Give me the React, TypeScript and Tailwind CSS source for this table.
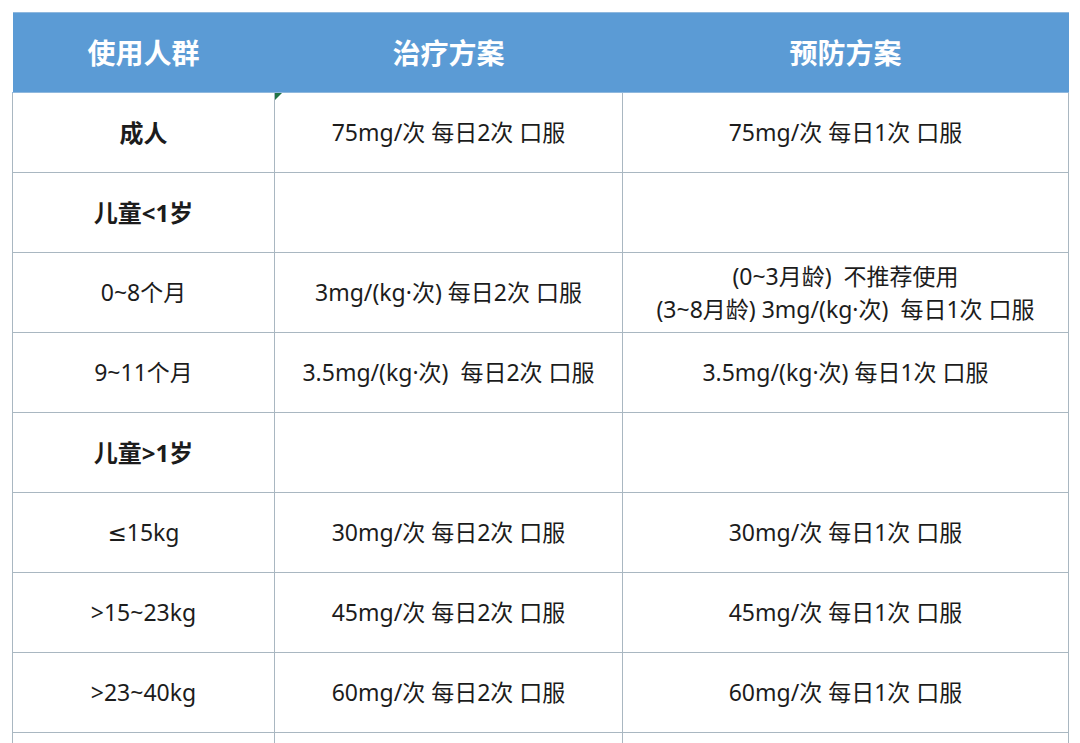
const header = ['使用人群', '治疗方案', '预防方案'];

type Row = { group: string; bold?: boolean; treat: string; prevent: string | string[] };

const rows: Row[] = [
  { group: '成人', bold: true, treat: '75mg/次 每日2次 口服', prevent: '75mg/次 每日1次 口服' },
  { group: '儿童<1岁', bold: true, treat: '', prevent: '' },
  {
    group: '0~8个月',
    treat: '3mg/(kg·次) 每日2次 口服',
    prevent: ['(0~3月龄)  不推荐使用', '(3~8月龄) 3mg/(kg·次)  每日1次 口服'],
  },
  { group: '9~11个月', treat: '3.5mg/(kg·次)  每日2次 口服', prevent: '3.5mg/(kg·次) 每日1次 口服' },
  { group: '儿童>1岁', bold: true, treat: '', prevent: '' },
  { group: '≤15kg', treat: '30mg/次 每日2次 口服', prevent: '30mg/次 每日1次 口服' },
  { group: '>15~23kg', treat: '45mg/次 每日2次 口服', prevent: '45mg/次 每日1次 口服' },
  { group: '>23~40kg', treat: '60mg/次 每日2次 口服', prevent: '60mg/次 每日1次 口服' },
  { group: '', treat: '', prevent: '' },
];

const cell = 'border border-[#a9b7c1] text-center align-middle p-0 whitespace-pre';

// the ≤ sign falls back to the CJK glyph otherwise
const renderGroup = (text: string) =>
  text.startsWith('≤') ? (
    <>
      <span style={{ fontFamily: '"DejaVu Sans", sans-serif' }}>≤</span>
      {text.slice(1)}
    </>
  ) : (
    text
  );

export default function App() {
  return (
    <div
      className="min-h-screen bg-white pl-[12px] pt-[12px]"
      style={{ fontFamily: '"Noto Sans", "Noto Sans CJK SC", sans-serif' }}
    >
      <table className="w-[1056px] table-fixed border-collapse text-[#1c1c1c]">
        <colgroup>
          <col className="w-[262px]" />
          <col className="w-[348px]" />
          <col className="w-[446px]" />
        </colgroup>
        <thead>
          <tr className="h-[80px] bg-[#5b9bd5]">
            {header.map((h) => (
              <th
                key={h}
                className="border-y border-[#8fb8de] p-0 text-center align-middle text-[28px] font-bold text-white"
              >
                {h}
              </th>
            ))}
          </tr>
        </thead>
        <tbody>
          {rows.map((r, i) => (
            <tr key={i} className="h-[80px]">
              <td className={`${cell} ${r.bold ? 'text-[24px] font-bold' : 'text-[23px] font-normal'}`}>
                {renderGroup(r.group)}
              </td>
              <td className={`${cell} relative text-[23px]`}>
                {i === 0 && (
                  <span className="absolute left-0 top-0 h-0 w-0 border-r-[7px] border-t-[7px] border-r-transparent border-t-[#217346]" />
                )}
                {r.treat}
              </td>
              <td className={`${cell} text-[23px]`}>
                {Array.isArray(r.prevent) ? (
                  <div className="flex flex-col items-center leading-[33px]">
                    {r.prevent.map((p) => (
                      <span key={p}>{p}</span>
                    ))}
                  </div>
                ) : (
                  r.prevent
                )}
              </td>
            </tr>
          ))}
        </tbody>
      </table>
    </div>
  );
}
